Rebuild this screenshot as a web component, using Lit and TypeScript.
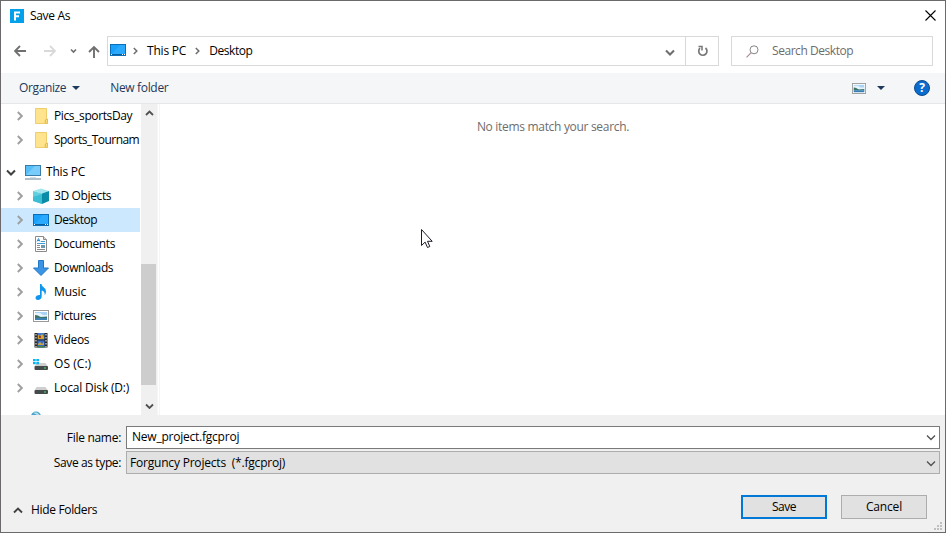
import { LitElement, html, css, svg, TemplateResult } from "lit";
import { customElement, property } from "lit/decorators.js";

/* Single-line label whose tracking is adjusted so that it spans a given width. */
@customElement("fit-text")
class FitText extends LitElement {
  @property({ type: Number }) span = 0;
  @property() text = "";
  static styles = css`
    :host { display: inline-block; white-space: pre; line-height: 16px; }
    span { display: inline-block; }
  `;
  firstUpdated() {
    const el = this.renderRoot.querySelector("span") as HTMLElement;
    const natural = el.getBoundingClientRect().width;
    if (this.span && natural) {
      el.style.letterSpacing = `${(this.span + 0.2 - natural) / this.text.length}px`;
    }
  }
  render() {
    return html`<span>${this.text}</span>`;
  }
}

const t = (text: string, span: number) => html`<fit-text .text=${text} .span=${span}></fit-text>`;

const icon = (w: number, h: number, body: unknown, cls = "") =>
  html`<svg class=${"ico " + cls} width=${w} height=${h} viewBox="0 0 ${w} ${h}">${body}</svg>`;

const desktopShape = svg`
  <rect x="0.5" y="1.5" width="15" height="11" fill="#18a0fb" stroke="#0b6fb8"/>
  <path d="M1 12L10 2h5v9z" fill="#3db0ff" opacity=".55"/>
  <path d="M1 11.5h14" stroke="#0a5c9c"/>
  <path d="M1 11.5h1M12 11.5h1M14 11.5h1" stroke="#fff"/>`;

const pictureShape = svg`
  <rect x="0.5" y="0.5" width="15" height="11" fill="#fff" stroke="#9a9a9a"/>
  <rect x="2" y="2" width="12" height="8" fill="#a9d3f5"/>
  <path d="M2 3h5l3 2h4v2H2z" fill="#e4f3fc"/>
  <path d="M2 5c3 0 4 1.600 6 2l6-.5V8H2z" fill="#3d7469"/>
  <rect x="2" y="8" width="12" height="2" fill="#3a7fb4"/>`;

const driveShape = svg`
  <path d="M2.500 7h9l2.500 3.500H.5z" fill="#cfcfcf"/>
  <rect x="0.500" y="10" width="13.500" height="4" rx="1" fill="#46494b"/>
  <rect x="10" y="11.500" width="2" height="1" fill="#3df05a"/>`;

const icons: Record<string, TemplateResult> = {
  folder: icon(16, 16, svg`
    <path d="M2 .5h11.500v11H15v4H2z" fill="#ffe793"/>
    <path d="M2.500 15.500V.5h11v10.500l-1.500 1.500v3z" fill="#ffe48d" stroke="#efcd6b"/>
    <path d="M12.500 15.500v-3.500l2-1v4.500z" fill="#fbdc79" stroke="#e3bd55"/>`),
  pc: icon(16, 16, svg`
    <rect x="0.5" y="1.500" width="15" height="10" fill="#55bdf8" stroke="#3a7ca8"/>
    <path d="M1 11L10 2h5v9z" fill="#8dd6ff" opacity=".6"/>
    <path d="M5 13.500h6" stroke="#cfdde6"/>
    <path d="M0 15h16" stroke="#7d97a9" stroke-width="1.200"/>`),
  cube: icon(16, 16, svg`
    <path d="M0 3L8 .5l8 2.500-7 2.500z" fill="#a4e6ef"/>
    <path d="M0 3L9 5.500V16L0 13z" fill="#62cfdf"/>
    <path d="M0 9L9 6v10L0 13z" fill="#2bb5cd" opacity=".7"/>
    <path d="M9 5.500L16 3v10l-7 3z" fill="#0a8ca8"/>`),
  desktop: icon(16, 14, desktopShape),
  document: icon(16, 16, svg`
    <path d="M2.500.5h8l3 3v12h-11z" fill="#fff" stroke="#8a8a8a"/>
    <path d="M10.500.5v3h3" fill="#ddd" stroke="#8a8a8a"/>
    <path d="M4 5.500l1.500-3 1.500 3M4.500 4.500h2" stroke="#2b8fd0" fill="none"/>
    <path d="M8 5.500h4M4 7.500h8" stroke="#3f9ad6"/>
    <path d="M4 9.500h3M4 11.500h3M4 13.500h8" stroke="#888"/>
    <rect x="8" y="9" width="4" height="3" fill="#6d99ae"/>`),
  download: icon(16, 16, svg`<path d="M5.500.5h5v7.500h5L8 15.500.5 8h5z" fill="#3b94e4" stroke="#2378c5"/>`),
  music: icon(16, 16, svg`
    <path d="M7 0h1.500c.3 3 4.500 3.500 4.500 7.500 0 1.500-.6 2.700-1.300 3.700.3-3-1-4.200-3-4.700v6C8.700 14.500 7 16 5 16S2.500 15 2.500 13.800c0-1.800 2.200-3 4.500-2.800z" fill="#0f97ee"/>`),
  picture: icon(16, 12, pictureShape),
  video: icon(16, 16, svg`
    <rect x="1.500" y="1" width="13" height="14.500" fill="#262626"/>
    <rect x="4.500" y="1" width="7" height="6.500" fill="#4778c8"/>
    <rect x="4.500" y="8.500" width="7" height="7" fill="#3b6cc4"/>
    <path d="M5 3l2 1 2-2 2 3v2H5z" fill="#d4a52c"/>
    <path d="M6 4h2v2H6z" fill="#9c3b48"/>
    <path d="M5 12l2-2 2 2 2-2v3H5z" fill="#c9a747"/>
    <path d="M4.500 14h7v1.500h-7z" fill="#468346"/>
    <path d="M3 2v13M13 2v13" stroke="#fff" stroke-dasharray="1.500 1.500"/>`),
  osdrive: icon(16, 16, svg`
    <g transform="translate(1,0)">${driveShape}</g>
    <path d="M0 3h2.700v2.300H0zM3.300 3H6v2.300H3.300zM0 6h2.700v2.300H0zM3.300 6H6v2.300H3.300z" fill="#08b5f2"/>`),
  drive: icon(16, 16, svg`<g transform="translate(1,0)">${driveShape}</g>`),
};

const chev = (cls = "") =>
  html`<svg class=${"ico " + cls} width="6" height="10" viewBox="0 0 6 10"><path d="M.8 1l4 4-4 4" fill="none" stroke="currentColor" stroke-width="1.900"/></svg>`;
const down = (w: number, sw: number, cls = "", up = false) => html`
  <svg class=${"ico " + cls} width=${w + 2} height=${w / 2 + 3} viewBox="0 0 ${w + 2} ${w / 2 + 3}">
    <path d=${up ? `M1 ${w / 2 + 1.5}l${w / 2}-${w / 2} ${w / 2} ${w / 2}` : `M1 1.500l${w / 2} ${w / 2} ${w / 2}-${w / 2}`}
      fill="none" stroke="currentColor" stroke-width=${sw}/>
  </svg>`;
const caret = html`<svg class="ico caret" width="8" height="4" viewBox="0 0 8 4"><path d="M0 0h8L4 4z" fill="#1e395b"/></svg>`;
const sep = html`<svg class="ico sep" width="5" height="8" viewBox="0 0 5 8"><path d="M.8 1L3.800 4l-3 3" fill="none" stroke="currentColor" stroke-width="1.500"/></svg>`;

interface Item { name: string; span: number; icon: string; selected?: boolean; }
const quick: Item[] = [
  { name: "Pics_sportsDay", span: 78, icon: "folder" },
  { name: "Sports_Tournam", span: 85, icon: "folder" },
];
const places: Item[] = [
  { name: "3D Objects", span: 57, icon: "cube" },
  { name: "Desktop", span: 43, icon: "desktop", selected: true },
  { name: "Documents", span: 61, icon: "document" },
  { name: "Downloads", span: 59, icon: "download" },
  { name: "Music", span: 32, icon: "music" },
  { name: "Pictures", span: 42, icon: "picture" },
  { name: "Videos", span: 35, icon: "video" },
  { name: "OS (C:)", span: 37, icon: "osdrive" },
  { name: "Local Disk (D:)", span: 75, icon: "drive" },
];

@customElement("app-root")
class AppRoot extends LitElement {
  static styles = css`
    :host {
      display: block; width: 946px; height: 533px; box-sizing: border-box;
      border: 1px solid #6b696b; background: #fff; color: #000; overflow: hidden;
      font: 12px/16px "Open Sans", "Noto Sans", sans-serif; position: relative;
    }
    * { box-sizing: border-box; }
    .window { display: flex; flex-direction: column; height: 531px; }
    .ico { display: block; flex: none; }
    .title { height: 30px; display: flex; align-items: center; padding: 0 9px; flex: none; }
    .title fit-text { margin-left: 6px; }
    .close { margin: -2px 0 0 auto; }
    .address { height: 42px; display: flex; align-items: flex-start; padding: 5px 12px 0 13px; flex: none; color: #6d6d6d; }
    .nav { display: flex; align-items: center; height: 30px; width: 93px; }
    .back { margin-right: 18px; }
    .fwd { margin-right: 14px; }
    .recent { margin-right: 11px; }
    .path { flex: 1; height: 30px; border: 1px solid #d9d9d9; display: flex; align-items: center; padding-left: 2px; }
    .path > .ico:first-child { margin-top: -2px; }
    .path .crumb { color: #000; }
    .sep { margin: 0 9px 0 7px; }
    .crumb + .sep { margin-left: 9px; }
    .drop { margin: 2px 10px 0 auto; }
    .refresh { width: 33px; align-self: stretch; border-left: 1px solid #d9d9d9; display: flex; align-items: center; justify-content: center; padding-left: 2px; }
    .search { margin-left: 12px; width: 202px; height: 30px; border: 1px solid #d9d9d9; display: flex; align-items: center; padding-left: 14px; gap: 13px; }
    .tools { height: 31px; background: #f5f6f7; border-bottom: 1px solid #e5e6e7; display: flex; align-items: center; padding: 0 15px 0 18px; flex: none; color: #1e395b; }
    .tools .caret { margin-left: 6px; }
    .tools .new { margin-left: 30px; }
    .tools .view { margin-left: auto; }
    .tools .view + .caret { margin: 0 29px 0 11px; }
    .body { height: 311px; display: flex; flex: none; overflow: hidden; }
    .tree { width: 139px; overflow: hidden; }
    .row { height: 24px; display: flex; align-items: center; padding-left: 16px; white-space: nowrap; color: #a0a0a0; }
    .row.sel { background: #cce8ff; }
    .row .ico + .ico, .row .ico + fit-text { margin-left: 5px; }
    .row .twist { margin-right: 5px; }
    .row fit-text { color: #000; }
    .row.root { margin-top: 8px; padding-left: 5px; }
    .root .twist { color: #404040; margin-right: 4px; }
    .next { padding: 8px 0 0 28px; }
    .scroll { width: 17px; margin-left: 1px; border-right: 1px solid #f5f5f5; background: #f0f0f0; display: flex; flex-direction: column; align-items: center; color: #505050; flex: none; }
    .scroll .upa { margin: 6px 0 147px; }
    .thumb { width: 15px; height: 121px; background: #cdcdcd; margin-bottom: 18px; align-self: flex-start; }
    .list { flex: 1; border-left: 1px solid #f5f5f5; margin-left: 1px; text-align: center; color: #6d6d6d; padding: 15px 0 0 1px; }
    .foot { flex: 1; background: #f0f0f0; display: flex; flex-direction: column; padding: 11px 5px 0 0; }
    .field { display: flex; align-items: center; height: 23px; margin-bottom: 2px; }
    .label { width: 120px; text-align: right; margin-right: 5px; }
    .box { flex: 1; height: 23px; border: 1px solid #7a7a7a; background: #fff; display: flex; align-items: center; padding: 0 3px 1px 5px; color: #505050; }
    .box fit-text { color: #000; }
    .box .ico { margin: 1px 0 0 auto; }
    .combo { background: #e1e1e1; border-color: #adadad; padding: 0 3px; }
    .actions { display: flex; align-items: center; margin-top: 19px; height: 24px; padding-right: 13px; }
    .hide { display: flex; align-items: center; gap: 8px; padding: 6px 0 0 12px; margin-right: auto; color: #404040; }
    .hide fit-text { color: #000; }
    .btn { width: 86px; height: 24px; border: 1px solid #adadad; background: #e1e1e1; display: flex; align-items: center; justify-content: center; margin-left: 14px; }
    .btn.default { border: 2px solid #0078d7; }
    .cursor { position: absolute; left: 419px; top: 227px; }
    .grip { position: absolute; right: 3px; bottom: 2px; }
  `;

  private row(i: Item) {
    return html`<div class="row ${i.selected ? "sel" : ""}">${chev("twist")}${icons[i.icon]}${t(i.name, i.span)}</div>`;
  }

  render() {
    return html`
      <div class="window">
        <div class="title">
          ${icon(14, 14, svg`<rect width="14" height="14" fill="#04a0ea"/><path d="M5 11.500V3.500h5M5 7.300h4" fill="none" stroke="#fff" stroke-width="2"/>`)}
          ${t("Save As", 40)}
          ${icon(11, 11, svg`<path d="M.5.5l10 10M10.500.5l-10 10" stroke="#000" stroke-width="1.100"/>`, "close")}
        </div>
        <div class="address">
          <div class="nav">
            ${icon(12, 12, svg`<path d="M12 6H1M6 1L1 6l5 5" fill="none" stroke="#707070" stroke-width="1.800"/>`, "back")}
            ${icon(12, 12, svg`<path d="M0 6h11M6 1l5 5-5 5" fill="none" stroke="#d9d9d9" stroke-width="1.800"/>`, "fwd")}
            ${down(5, 1.6, "recent")}
            ${icon(12, 13, svg`<path d="M6 13V2M1 7l5-5 5 5" fill="none" stroke="#707070" stroke-width="1.900"/>`)}
          </div>
          <div class="path">
            ${icons.desktop}
            ${sep}
            <span class="crumb">${t("This PC", 39)}</span>
            ${sep}
            <span class="crumb">${t("Desktop", 43)}</span>
            ${down(8, 2, "drop")}
            <div class="refresh">
              ${icon(12, 12, svg`<path d="M3 3.200A4.100 4.100 0 1 0 8.500 3" fill="none" stroke="#777" stroke-width="1.700"/><path d="M1.500 1.500h3.500v4" fill="none" stroke="#777" stroke-width="1.500"/>`)}
            </div>
          </div>
          <div class="search">
            ${icon(13, 13, svg`<circle cx="8" cy="4.800" r="4" fill="none" stroke="#858585"/><path d="M5 7.800L.5 12.300" stroke="#a98b96" stroke-width="1.200"/>`)}
            ${t("Search Desktop", 81)}
          </div>
        </div>
        <div class="tools">
          ${t("Organize", 47)}${caret}
          <span class="new">${t("New folder", 58)}</span>
          <svg class="ico view" width="14" height="11" viewBox="0 0 16 12" preserveAspectRatio="none">${pictureShape}</svg>${caret}
          <svg class="ico" width="16" height="16" viewBox="0 0 16 16">
            <circle cx="8" cy="8" r="7.500" fill="#0a6cce" stroke="#0d4a8c"/>
            <text x="8" y="12.300" text-anchor="middle" font-size="12" font-weight="700" fill="#fff">?</text>
          </svg>
        </div>
        <div class="body">
          <div class="tree">
            ${quick.map((i) => this.row(i))}
            <div class="row root">${down(8, 2, "twist")}${icons.pc}${t("This PC", 39)}</div>
            ${places.map((i) => this.row(i))}
            <div class="next">${icon(16, 12, svg`<circle cx="7" cy="8.500" r="5" fill="#4ba4cc"/><path d="M4 4.500h4l3 3-4-1z" fill="#b8e2ef"/>`)}</div>
          </div>
          <div class="scroll">
            ${down(7, 1.8, "upa", true)}
            <div class="thumb"></div>
            ${down(7, 1.8)}
          </div>
          <div class="list">${t("No items match your search.", 152)}</div>
        </div>
        <div class="foot">
          <div class="field"><span class="label">${t("File name:", 54)}</span><div class="box">${t("New_project.fgcproj", 107)}${down(8, 1.3)}</div></div>
          <div class="field"><span class="label">${t("Save as type:", 67)}</span><div class="box combo">${t("Forguncy Projects  (*.fgcproj)", 155)}${down(8, 1.3)}</div></div>
          <div class="actions">
            <div class="hide">${down(8, 1.8, "", true)}${t("Hide Folders", 66)}</div>
            <div class="btn default">${t("Save", 24)}</div>
            <div class="btn">${t("Cancel", 36)}</div>
          </div>
        </div>
      </div>
      <svg class="cursor" width="13" height="20" viewBox="0 0 13 20">
        <path d="M1.500 1.500v16l3.600-3.400L7.500 19.500l2.300-1-2.300-5.200h4.700z" fill="#fff" stroke="#1c1c28"/>
      </svg>
      <svg class="grip" width="8" height="8" viewBox="0 0 8 8">
        <path d="M6 0h2v2H6zM3 3h2v2H3zM6 3h2v2H6zM0 6h2v2H0zM3 6h2v2H3zM6 6h2v2H6z" fill="#bfbfbf"/>
      </svg>`;
  }
}
